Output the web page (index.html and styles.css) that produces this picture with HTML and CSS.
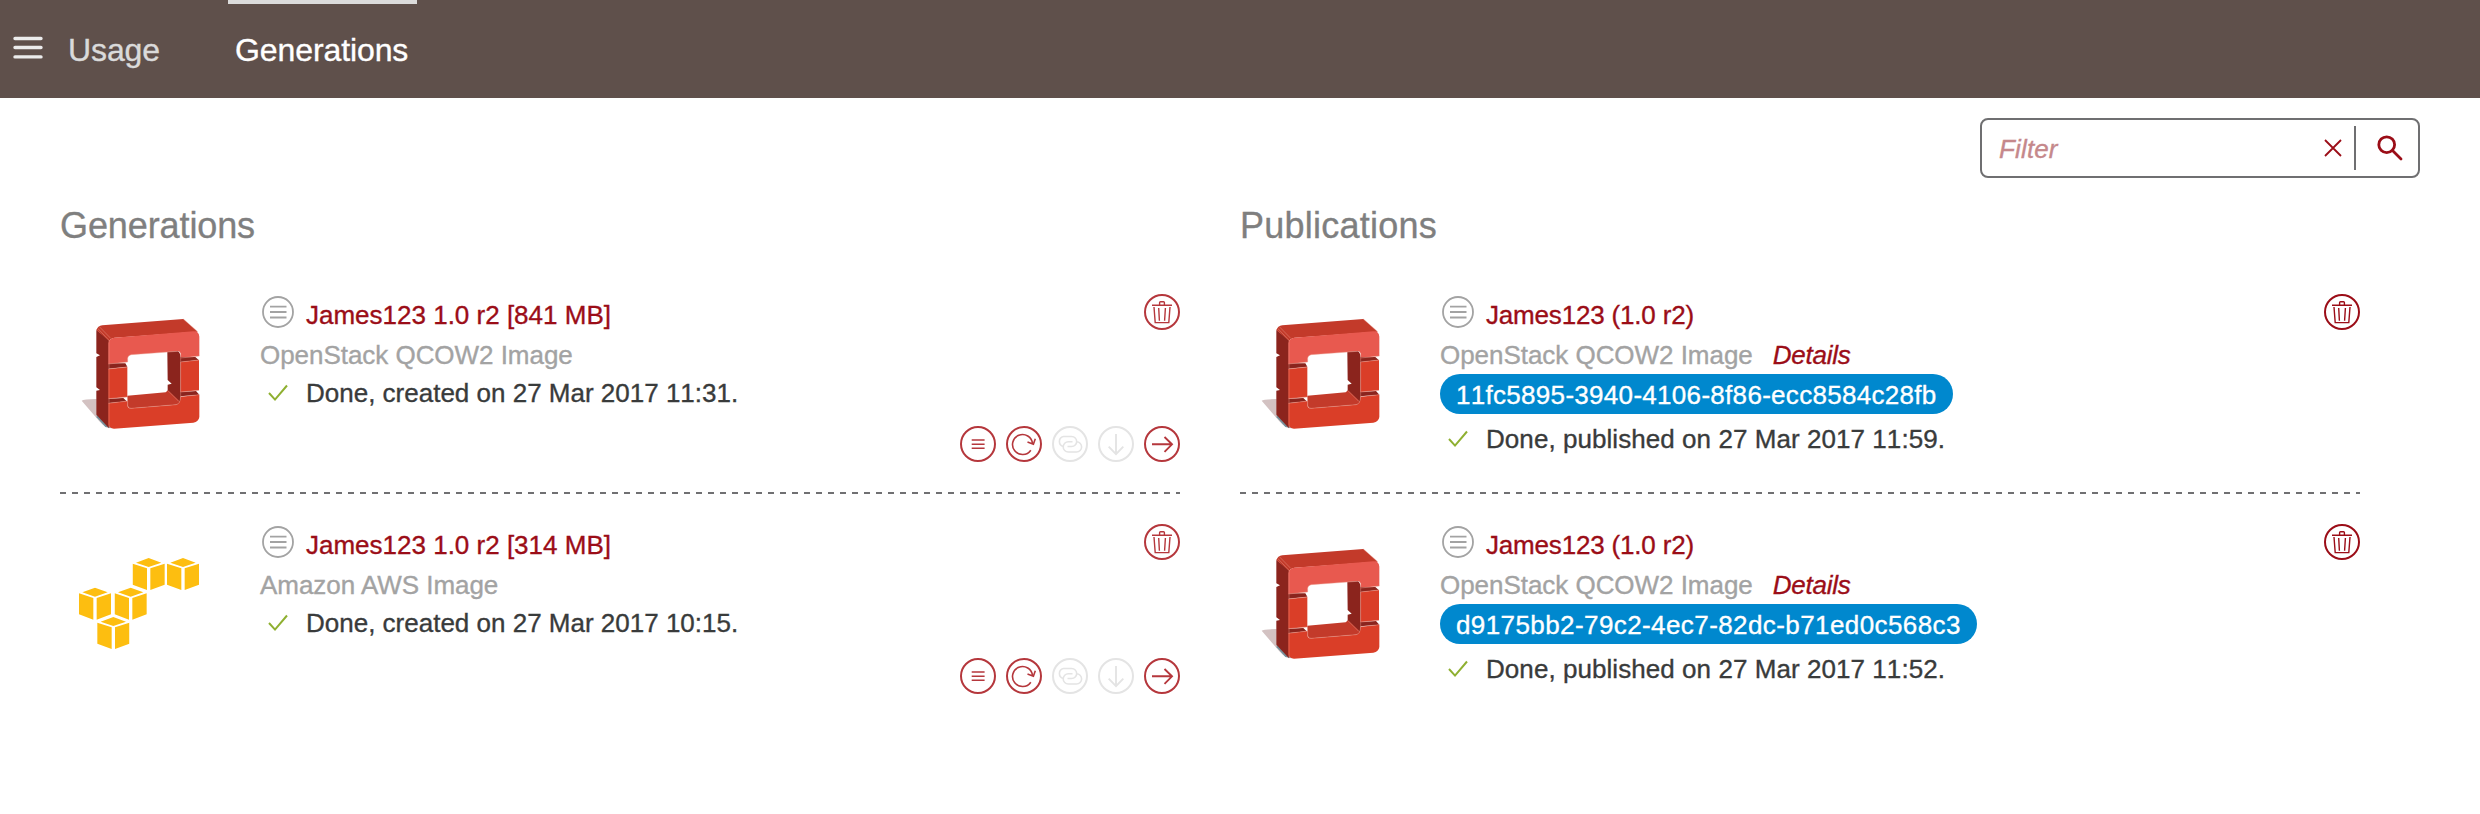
FILE: index.html
```html
<!DOCTYPE html>
<html lang="en">
<head>
<meta charset="utf-8">
<title>Generations</title>
<link rel="stylesheet" href="styles.css">
</head>
<body>
<svg class="sprite" aria-hidden="true">
  <symbol id="openstack" viewBox="0 0 450 420">
    <path fill="#d3c2c2" d="M35 302Q40 298 80 297V345L108 379Q98 376 88 364Z"/>
    <path fill="#75909c" d="M80 344L80 352L106 381L124 385L116 376Z"/>
    <path fill="#8b241d" d="M79 90L118 120V190L166 190L172 200L117 206V296L160 294L170 304L118 309L117 385L79 344V272L90 270L79 262V171L90 166L79 160Z"/>
    <path fill="#c33a2a" d="M79 90Q83 78 97 76L340 57L383 95L134 113Q121 115 117 123Z"/>
    <path fill="#e8594f" d="M115 192V130Q117 116 132 113L370 94Q387 94 388 110V168L332 174V160Q330 153 322 154L183 164Q174 166 173 174V186Z"/>
    <path fill="#8b241d" d="M292 156L322 154Q330 154 332 172L376 171L386 180L332 186V276L378 273L388 284L332 289V308L293 274V254L305 251L293 240Z"/>
    <path fill="#da3e28" d="M115 207L172 201V291L115 296ZM332 186L387 180V271L332 276ZM115 310L173 303V318Q174 326 185 325L318 314Q331 312 332 290L388 284V351Q386 365 370 368L132 386Q117 385 115 373Z"/>
    <path fill="#c33a2a" d="M172 287L287 277L294 271L328 302Q330 313 317 314L185 325Q174 326 173 314Z"/>
    <g fill="none" stroke="#e99c8f" stroke-width="1.3">
      <path d="M83 85L117 121V385M88 80L122 115M115 192L173 186V174Q174 166 183 164L322 154M332 174L388 168M115 207L172 201M115 296L172 291M115 310L173 303V318Q174 326 185 325L318 314Q331 312 332 290L388 284M332 186L387 180M332 276L387 271M332 160V290M340 57L383 95M294 272L326 304"/>
    </g>
  </symbol>
  <symbol id="cube" viewBox="0 0 98 98">
    <path d="M11 15L49 1L87 15L49 28ZM1 18L44 32V97L1 81ZM97 18L54 32V97L97 81Z"/>
  </symbol>
  <symbol id="aws" viewBox="0 -30 450 420">
    <g fill="#fdbe10">
      <use href="#cube" x="187" y="53" width="98" height="98"/>
      <use href="#cube" x="290" y="53" width="98" height="98"/>
      <use href="#cube" x="26" y="142" width="98" height="98"/>
      <use href="#cube" x="133" y="142" width="98" height="98"/>
      <use href="#cube" x="81" y="230" width="98" height="98"/>
    </g>
  </symbol>
  <symbol id="info" viewBox="0 0 32 32">
    <circle cx="16" cy="16" r="15" stroke-width="1.8"/>
    <path stroke-width="1.8" d="M8 10.7H24.5M8 16H24.5M8 21.5H24.5"/>
  </symbol>
  <symbol id="check" viewBox="0 0 20 18"><path stroke-width="2" d="M1 9L7 15.6L19 1.5"/></symbol>
  <symbol id="trash" viewBox="0 0 36 36">
    <circle cx="18" cy="18" r="17" stroke-width="2"/>
    <path stroke-width="1.4" d="M8 11.3H28M15.6 11V8.6Q15.6 7.7 16.5 7.7H19.5Q20.4 7.7 20.4 8.6V11M10 13L11.2 28.6H24.8L26 13M14.7 14L15.4 26.8M21.4 14L20.6 26.8"/>
  </symbol>
  <symbol id="list" viewBox="0 0 36 36">
    <circle cx="18" cy="18" r="17" stroke-width="2"/>
    <path stroke-width="1.5" d="M11.7 14.1H24.6M11.7 18.2H24.6M11.7 22.2H24.6"/>
  </symbol>
  <symbol id="redo" viewBox="0 0 36 36">
    <circle cx="18" cy="18" r="17" stroke-width="2"/>
    <path stroke-width="1.6" d="M24.8 24.2A10 10 0 1 1 26.5 17.7M21.5 16.1L27.4 18.3L29.3 12.8"/>
  </symbol>
  <symbol id="link" viewBox="0 0 36 36">
    <circle cx="18" cy="18" r="17" stroke-width="2"/>
    <path stroke-width="1.6" d="M11.5 20.5A5.1 5.1 0 0 1 11.5 10.5H19.7A5 5 0 0 1 19.7 20.5H15.5M24.5 15.8A5.1 5.1 0 0 1 24.5 26H16.3A5 5 0 0 1 16.3 15.8H20.5"/>
  </symbol>
  <symbol id="down" viewBox="0 0 36 36">
    <circle cx="18" cy="18" r="17" stroke-width="2"/>
    <path stroke-width="1.9" d="M18 8V28M10.7 20.7L18 28.2L25.3 20.7"/>
  </symbol>
  <symbol id="right" viewBox="0 0 36 36">
    <circle cx="18" cy="18" r="17" stroke-width="2"/>
    <path stroke-width="1.9" d="M8 18.3H28M20.5 11L28 18.3L20.5 25.8"/>
  </symbol>
</svg>

<header class="topbar">
  <svg class="menu" viewBox="0 0 30 24"><path d="M2 2.5H28M2 11.5H28M2 20.9H28"/></svg>
  <a class="tab">Usage</a>
  <a class="tab tab-active">Generations</a>
</header>

<div class="filter">
  <span class="filter-label">Filter</span>
  <svg class="clear" viewBox="0 0 18 18"><path d="M1 1L17 17M17 1L1 17"/></svg>
  <span class="divider"></span>
  <svg class="search" viewBox="0 0 26 26"><circle cx="9.7" cy="9.7" r="7.9"/><path d="M15.5 15.5L24 24"/></svg>
</div>

<main class="columns">
  <section class="column generations">
    <h2>Generations</h2>
    <article class="row">
      <svg class="logo"><use href="#openstack"/></svg>
      <div class="info">
        <div class="name"><svg class="icon-info"><use href="#info"/></svg><a>James123 1.0 r2 [841 MB]</a></div>
        <div class="kind">OpenStack QCOW2 Image</div>
        <div class="status"><svg class="icon-check"><use href="#check"/></svg><span>Done, created on 27 Mar 2017 11:31.</span></div>
      </div>
      <div class="side">
        <svg class="action"><use href="#trash"/></svg>
        <div class="actions">
          <svg class="action"><use href="#list"/></svg>
          <svg class="action"><use href="#redo"/></svg>
          <svg class="action disabled"><use href="#link"/></svg>
          <svg class="action disabled"><use href="#down"/></svg>
          <svg class="action"><use href="#right"/></svg>
        </div>
      </div>
    </article>
    <article class="row">
      <svg class="logo"><use href="#aws"/></svg>
      <div class="info">
        <div class="name"><svg class="icon-info"><use href="#info"/></svg><a>James123 1.0 r2 [314 MB]</a></div>
        <div class="kind">Amazon AWS Image</div>
        <div class="status"><svg class="icon-check"><use href="#check"/></svg><span>Done, created on 27 Mar 2017 10:15.</span></div>
      </div>
      <div class="side">
        <svg class="action"><use href="#trash"/></svg>
        <div class="actions">
          <svg class="action"><use href="#list"/></svg>
          <svg class="action"><use href="#redo"/></svg>
          <svg class="action disabled"><use href="#link"/></svg>
          <svg class="action disabled"><use href="#down"/></svg>
          <svg class="action"><use href="#right"/></svg>
        </div>
      </div>
    </article>
  </section>

  <section class="column publications">
    <h2>Publications</h2>
    <article class="row">
      <svg class="logo"><use href="#openstack"/></svg>
      <div class="info">
        <div class="name"><svg class="icon-info"><use href="#info"/></svg><a>James123 (1.0 r2)</a></div>
        <div class="kind">OpenStack QCOW2 Image<a class="details">Details</a></div>
        <div class="pill pill-first">11fc5895-3940-4106-8f86-ecc8584c28fb</div>
        <div class="status"><svg class="icon-check"><use href="#check"/></svg><span>Done, published on 27 Mar 2017 11:59.</span></div>
      </div>
      <div class="side"><svg class="action"><use href="#trash"/></svg></div>
    </article>
    <article class="row">
      <svg class="logo"><use href="#openstack"/></svg>
      <div class="info">
        <div class="name"><svg class="icon-info"><use href="#info"/></svg><a>James123 (1.0 r2)</a></div>
        <div class="kind">OpenStack QCOW2 Image<a class="details">Details</a></div>
        <div class="pill">d9175bb2-79c2-4ec7-82dc-b71ed0c568c3</div>
        <div class="status"><svg class="icon-check"><use href="#check"/></svg><span>Done, published on 27 Mar 2017 11:52.</span></div>
      </div>
      <div class="side"><svg class="action"><use href="#trash"/></svg></div>
    </article>
  </section>
</main>
</body>
</html>
```
FILE: styles.css
```css
* { box-sizing: border-box; }
body {
  margin: 0;
  height: 814px;
  overflow: hidden;
  background: #fff;
  color: #393b3b;
  font: 26px/40px "Liberation Sans", Arial, sans-serif;
  white-space: nowrap;
  -webkit-text-stroke: 0.35px;
}
svg { display: block; flex: none; fill: none; stroke: none; }
.sprite { position: absolute; width: 0; height: 0; }

.topbar {
  display: flex;
  height: 98px;
  padding-left: 13px;
  background: #5f504b;
}
.menu { width: 30px; height: 24px; margin-top: 36px; stroke: #ececec; stroke-width: 3.4; stroke-linecap: round; }
.tab {
  height: 98px;
  margin-left: 17px;
  padding: 0 8px;
  border-top: 4px solid transparent;
  color: #dadada;
  font-size: 32px;
  line-height: 92px;
  letter-spacing: -0.1px;
}
.tab-active { width: 189px; margin-left: auto; margin-right: 2063px; padding-left: 7px; border-top-color: #dbdbdb; color: #fff; }

.filter {
  display: flex;
  align-items: center;
  width: 440px;
  height: 60px;
  margin: 20px 60px 0 auto;
  padding-left: 17px;
  border: 2px solid #6f6f71;
  border-radius: 8px;
}
.filter-label { flex: 1; padding-top: 1px; color: #c5888b; font-style: italic; letter-spacing: 0.15px; }
.clear { width: 18px; height: 18px; margin-right: 12px; stroke: #9b0d17; stroke-width: 1.8; }
.divider { width: 2px; height: 44px; margin-right: 21px; background: #6f6f71; }
.search { width: 26px; height: 26px; margin-right: 15px; stroke: #9b0d17; stroke-width: 2.8; stroke-linecap: round; }

.columns {
  display: grid;
  grid-template-columns: 1120px 1120px;
  column-gap: 60px;
  padding-left: 60px;
}
h2 {
  height: 86px;
  margin: 0;
  padding-top: 26px;
  color: #7f7f7f;
  font-size: 36px;
  font-weight: 400;
  line-height: 44px;
  letter-spacing: -0.1px;
}
.publications h2 { letter-spacing: 0.25px; }
.row {
  display: grid;
  grid-template-columns: 200px 1fr auto;
  height: 230px;
  background: repeating-linear-gradient(90deg, #707072 0 6px, #fff 6px 12px) 0 100% / 100% 2px no-repeat;
}
.row:last-child { background: none; }
.logo { width: 150px; height: 140px; margin: 36px 0 0 10px; }
.info { padding-top: 31px; }
.name { display: flex; height: 40px; color: #9b0d17; }
.publications .name { letter-spacing: -0.18px; }
.icon-info { width: 32px; height: 32px; margin: 1px 12px 0 2px; stroke: #a3a3a3; }
.kind { height: 39px; color: #a3a3a3; letter-spacing: -0.04px; }
.details { margin-left: 20px; color: #9b0d17; font-style: italic; letter-spacing: -0.25px; }
.status { display: flex; align-items: center; height: 38px; font-kerning: none; }
.icon-check { width: 20px; height: 18px; margin: 0 18px 0 8px; stroke: #8fb031; }
.side { display: flex; flex-direction: column; align-items: flex-end; padding-top: 30px; }
.action { width: 36px; height: 36px; stroke: #b5373c; }
.actions { display: flex; gap: 10px; margin-top: 96px; }
.row:last-child .actions { margin-top: 98px; }
.disabled { stroke: #e4e4e4; }
.pill {
  width: max-content;
  height: 40px;
  padding: 1px 16px 0;
  border-radius: 20px;
  background: #0088ce;
  color: #fff;
  font-kerning: none;
  letter-spacing: 0.41px;
}
.pill-first { letter-spacing: 0.3px; }
.publications .status { height: 50px; letter-spacing: 0.06px; }
.publications .action { stroke: #9b0d17; }
```
